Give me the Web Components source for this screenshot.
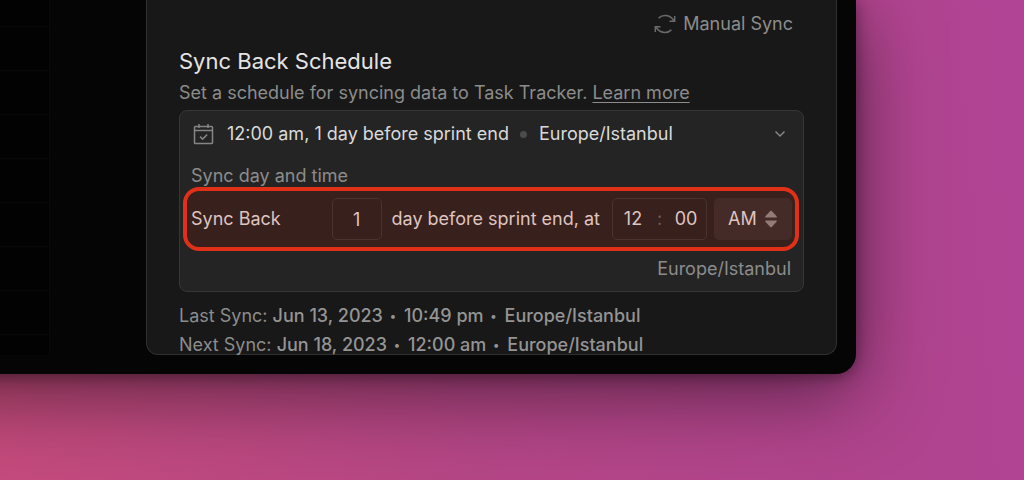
<!DOCTYPE html>
<html lang="en">
<head>
<meta charset="utf-8">
<meta name="viewport" content="width=device-width, initial-scale=1">
<title>Sync Back Schedule</title>
<style>
  body {
    margin: 0;
    min-height: 100vh;
    background: linear-gradient(85deg, #c44b7c 0%, #b44686 45%, #b0448e 85%, #b24496 100%);
    font-family: Inter, "Liberation Sans", sans-serif;
    font-size: 18px;
    line-height: 24px;
    color: #8c8c8c;
    overflow: hidden;
  }
</style>
</head>
<body>
<app-window>
  <settings-panel>
    <manual-sync></manual-sync>
    <section-intro heading="Sync Back Schedule">
      Set a schedule for syncing data to Task Tracker. <a href="#learn-more">Learn more</a>
    </section-intro>
    <schedule-card when="12:00 am, 1 day before sprint end" zone="Europe/Istanbul">
      <schedule-row></schedule-row>
    </schedule-card>
    <sync-log>
      <sync-time label="Last Sync:" date="Jun 13, 2023" time="10:49 pm" zone="Europe/Istanbul"></sync-time>
      <sync-time label="Next Sync:" date="Jun 18, 2023" time="12:00 am" zone="Europe/Istanbul"></sync-time>
    </sync-log>
  </settings-panel>
</app-window>

<script>
(function () {
  "use strict";

  function define(name, render) {
    customElements.define(name, class extends HTMLElement {
      connectedCallback() {
        if (this.shadowRoot) return;
        const root = this.attachShadow({ mode: "open" });
        root.innerHTML = render((attr) => this.getAttribute(attr) || "");
      }
    });
  }

  // The window runs on past the left edge, so its shadow stays even there.
  define("app-window", () => `
    <style>
      :host {
        display: flex;
        margin: 0 168px 0 -120px;
        padding: 0 19px 19px 120px;
        background: #050505;
        border-radius: 0 0 20px 0;
        box-shadow: 0 2px 16px rgba(0, 0, 0, 0.4), 0 20px 80px rgba(0, 0, 0, 0.5);
      }
      .rail {
        flex: none;
        width: 49px;
        margin-right: 96px;
        border-right: 1px solid #090909;
        background: repeating-linear-gradient(#020202 0 26px, #080808 26px 27px, #020202 27px 44px);
      }
      slot { display: block; flex: 1; min-width: 0; }
    </style>
    <div class="rail"></div>
    <slot></slot>
  `);

  define("settings-panel", () => `
    <style>
      :host {
        display: block;
        padding: 11px 32px 0;
        background: #181818;
        border: 1px solid #303030;
        border-top: 0;
        border-radius: 0 0 12px 12px;
      }
    </style>
    <slot></slot>
  `);

  define("manual-sync", () => `
    <style>
      :host { display: flex; justify-content: flex-end; padding-right: 11px; margin-bottom: 9px; }
      button {
        display: flex;
        align-items: center;
        gap: 7px;
        height: 26px;
        padding: 0;
        border: 0;
        background: none;
        color: inherit;
        font: inherit;
      }
      svg { display: block; fill: none; stroke: #6a6a6a; stroke-width: 1.5; }
    </style>
    <button type="button">
      <svg width="22" height="20" viewBox="0 0 22 20" aria-hidden="true">
        <path d="M4.600 4.100C6.400 2.400 8.600 1.500 11 1.500c3.600 0 6.800 1.900 8.800 5M20.700 2v5.200h-5.200M17.400 15.900c-1.800 1.700-4 2.600-6.400 2.600-3.600 0-6.800-1.900-8.800-5M1.300 18v-5.200h5.200"/>
      </svg>
      Manual Sync
    </button>
  `);

  define("section-intro", (attr) => `
    <style>
      :host { display: block; margin-bottom: 5px; }
      h2 { margin: 0 0 5px; font-size: 22px; line-height: 30px; font-weight: 400; color: #e4e4e4; }
      p { margin: 0; }
      ::slotted(a) { color: inherit; text-underline-offset: 3px; }
    </style>
    <h2>${attr("heading")}</h2>
    <p><slot></slot></p>
  `);

  define("schedule-card", (attr) => `
    <style>
      :host {
        display: block;
        padding-bottom: 10px;
        background: #242424;
        border: 1px solid #363636;
        border-radius: 8px;
      }
      button {
        display: flex;
        align-items: center;
        width: 100%;
        height: 46px;
        padding: 0 17px 0 13px;
        border: 0;
        background: none;
        color: #dadada;
        font: inherit;
        text-align: left;
      }
      svg { display: block; flex: none; fill: none; stroke: #858585; stroke-width: 1.5; }
      .when { margin-left: 13px; }
      .dot { width: 7px; height: 7px; margin: 0 12px 0 11px; border-radius: 50%; background: #4c4c4c; }
      .chevron { margin-left: auto; }
      .label { margin: 8px 11px 0; line-height: 22px; }
      .zone { margin: 6px 12px 0; text-align: right; }
    </style>
    <button type="button" aria-expanded="true">
      <svg width="21" height="22" viewBox="0 0 21 22" aria-hidden="true">
        <path d="M2.300 3.500h16.400c.5 0 .8.3.8.8v15.400c0 .5-.3.8-.8.8H2.300c-.5 0-.8-.3-.8-.8V4.300c0-.5.3-.8.8-.8zM1.500 7.500h18M6 1v4M15 1v4M7 13.600l2.600 2.500 4.600-4.700"/>
      </svg>
      <span class="when">${attr("when")}</span>
      <span class="dot"></span>
      <span>${attr("zone")}</span>
      <svg class="chevron" width="12" height="8" viewBox="0 0 12 8" aria-hidden="true">
        <path d="M1.500 1.500L6 6l4.500-4.500"/>
      </svg>
    </button>
    <div class="label">Sync day and time</div>
    <slot></slot>
    <div class="zone">${attr("zone")}</div>
  `);

  define("schedule-row", () => `
    <style>
      :host {
        display: flex;
        align-items: center;
        box-sizing: border-box;
        height: 64px;
        margin: 0 4px 0 3px;
        padding: 0 3px 0 4px;
        background: #38201d;
        border: 4px solid #e03118;
        border-radius: 16px;
        color: #dfc4c0;
      }
      .lead { flex: 1; }
      input, select {
        box-sizing: border-box;
        margin: 0;
        color: inherit;
        font: inherit;
        outline: 0;
      }
      input { text-align: center; border: 0; background: none; padding: 0; }
      .day, .time {
        box-sizing: border-box;
        height: 42px;
        border: 1px solid #4b3330;
        border-radius: 5px;
      }
      .day { width: 50px; margin-right: 10px; }
      .time {
        display: flex;
        align-items: center;
        justify-content: space-between;
        width: 95px;
        margin: 0 7px 0 12px;
        padding: 0 7px;
      }
      .time input { width: 26px; }
      .colon { color: #755c58; }
      .half { position: relative; }
      select {
        display: block;
        width: 78px;
        height: 42px;
        padding: 0 14px;
        border: 0;
        border-radius: 5px;
        background: #442b28;
        appearance: none;
      }
      svg { position: absolute; right: 15px; top: 12px; fill: #937b78; pointer-events: none; }
    </style>
    <label class="lead" for="day">Sync Back</label>
    <input class="day" id="day" value="1" inputmode="numeric">
    <label for="hour">day before sprint end, at</label>
    <div class="time">
      <input id="hour" value="12" inputmode="numeric">
      <span class="colon">:</span>
      <input value="00" inputmode="numeric" aria-label="Minutes">
    </div>
    <div class="half">
      <select aria-label="AM or PM"><option>AM</option><option>PM</option></select>
      <svg width="12" height="18" viewBox="0 0 12 18" aria-hidden="true">
        <path d="M5.200 1.100q.8-.8 1.600 0L11.600 6.200q.8 1.200-.6 1.300H1Q-.4 7.400.4 6.200zM5.200 16.900q.8.8 1.600 0l4.800-5.100q.8-1.200-.6-1.300H1q-1.400.1-.6 1.300z"/>
      </svg>
    </div>
  `);

  define("sync-log", () => `
    <style>
      :host { display: flex; flex-direction: column; gap: 9px; margin: 14px 0 -1px; }
    </style>
    <slot></slot>
  `);

  define("sync-time", (attr) => `
    <style>
      :host { display: block; line-height: 20px; }
      b { font-weight: 500; color: #949494; }
      i { margin: 0 3px 0 2px; font-size: 12px; line-height: 12px; font-style: normal; vertical-align: 2px; }
    </style>
    ${attr("label")} <b>${attr("date")} <i>•</i> ${attr("time")} <i>•</i> ${attr("zone")}</b>
  `);
})();
</script>
</body>
</html>
